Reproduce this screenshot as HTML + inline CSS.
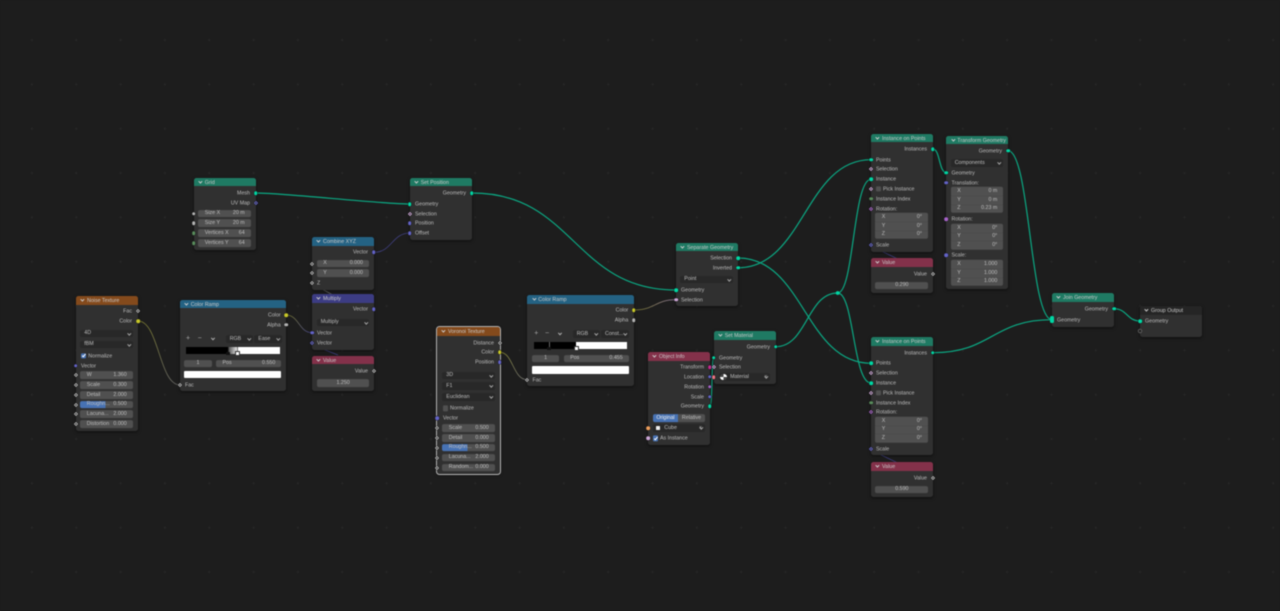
<!DOCTYPE html>
<html><head><meta charset="utf-8"><title>Geometry Nodes</title>
<style>
html,body{margin:0;padding:0;width:1280px;height:611px;overflow:hidden;background:#1d1d1d}
#a{position:absolute;left:0;top:0;width:1280px;height:611px;overflow:hidden;filter:blur(.4px);font-family:"Liberation Sans",sans-serif;font-size:5.3px;color:#bcbcbc;
background:#1d1d1d radial-gradient(circle,#272727 0,#272727 .8px,transparent 1.3px) 9.8px 17.9px/44.33px 44.33px}
svg{position:absolute;left:0;top:0}
.n{position:absolute;background:#303030;border-radius:2.5px;box-shadow:0 1px 3px rgba(0,0,0,.55)}
.h{height:8.6px;line-height:10px;padding-left:11px;border-radius:2.5px 2.5px 0 0;color:#c8c8c8;position:relative;white-space:nowrap}
.h:before{content:"";position:absolute;left:5.4px;top:2.2px;width:1.8px;height:1.8px;border-right:.6px solid #ccc;border-bottom:.6px solid #ccc;transform:rotate(45deg)}
.G{background:#1f7a63}.T{background:#844a1c}.C{background:#246283}.V{background:#3c3c83}.I{background:#83314a}
.l,.R,.f,.s,.o,.d,.k,.x{position:absolute}
.l,.R{white-space:nowrap;line-height:8px;transform:translateY(calc(-50% + .7px))}
.R{transform:translate(-100%,calc(-50% + .7px))}
.f,.s{height:7.8px;line-height:7.8px;border-radius:2px;transform:translateY(-50%);display:flex;justify-content:space-between;padding:.7px 6px 0 6.5px;box-sizing:border-box;white-space:nowrap;background:#505050;color:#bebebe}
.f.c{justify-content:center}
.s{background:#282828;padding-left:4px;justify-content:flex-start;position:absolute}
.s:after{content:"";position:absolute;right:2.4px;top:2px;width:1.6px;height:1.6px;border-right:.5px solid #aaa;border-bottom:.5px solid #aaa;transform:rotate(45deg)}
.o,.d{width:3.6px;height:3.6px;transform:translate(-50%,-50%);border-radius:50%;background:currentColor;box-shadow:0 0 0 .4px #181818}
.d{width:3px;height:3px;border-radius:0;transform:translate(-50%,-50%) rotate(45deg);background:radial-gradient(circle,#2c2c2c 0,#2c2c2c 22%,currentColor 45%)}
.g{color:#00d6a3}.v{color:#6363c7}.y{color:#c7c729}.w{color:#b4b4b4}.p{color:#cca6d6}.i{color:#598c5c}.r{color:#a663c7}.m{color:#c7298f}.b{color:#ed9e5c}.t{color:#eb7582}
.k{width:5.3px;height:5.3px;border-radius:1px;background:#4772b3;transform:translateY(-50%)}
.k.u{background:#505050}
.k.q:after{content:"";position:absolute;left:1.7px;top:.6px;width:1.4px;height:2.6px;border-right:.7px solid #fff;border-bottom:.7px solid #fff;transform:rotate(40deg)}
.x{background:#fff}
.ch{position:absolute;width:2.2px;height:2.2px;border-right:.6px solid #aaa;border-bottom:.6px solid #aaa;transform:translate(-50%,-70%) rotate(45deg)}
.pm{position:absolute;font-size:7px;color:#aaa;line-height:8px;transform:translate(-50%,-50%)}
</style></head><body><div id="a">
<svg width="1280" height="611" viewBox="0 0 1280 611" fill="none">
<defs>
<linearGradient id="y1" gradientUnits="userSpaceOnUse" x1="138" y1="321" x2="180" y2="385"><stop offset="0" stop-color="#7c7c30"/><stop offset="1" stop-color="#666"/></linearGradient>
<linearGradient id="y2" gradientUnits="userSpaceOnUse" x1="286" y1="315" x2="312" y2="333"><stop offset="0" stop-color="#7c7c30"/><stop offset="1" stop-color="#45458a"/></linearGradient>
<linearGradient id="y3" gradientUnits="userSpaceOnUse" x1="500" y1="352" x2="527" y2="380"><stop offset="0" stop-color="#7c7c30"/><stop offset="1" stop-color="#777"/></linearGradient>
<linearGradient id="y4" gradientUnits="userSpaceOnUse" x1="634" y1="310" x2="676" y2="300"><stop offset="0" stop-color="#7c7c30"/><stop offset="1" stop-color="#85708f"/></linearGradient>
</defs>
<g stroke="#0ba883" stroke-width="1.2">
<path d="M256 193C285 193 380 204 410 204"/>
<path d="M472 193C574 193 574 290 676 290"/>
<path d="M738 258C804 258 805 363.3 871 363.3"/>
<path d="M738 267.7C804 267.7 805 159.7 871 159.7"/>
<path d="M775.7 346.7C807 346.7 807 293 837.7 293"/>
<path d="M837.7 293C854 293 853 179.3 871 179.3"/>
<path d="M837.7 293C854 293 853 383 871 383"/>
<path d="M933 149C940 149 939 172.7 946.3 172.7"/>
<path d="M1008 150.7C1030 150.7 1030 319.7 1052 319.7"/>
<path d="M933 352.7C992 352.7 992 319.7 1052 319.7"/>
<path d="M1114 308.7C1127 308.7 1127 321 1140 321"/>
<path d="M710 406C712.5 406 711.5 358 713.7 358"/>
</g>
<g stroke-width=".8">
<path d="M374 252.3C392 252.3 392 233 410 233" stroke="#3f3f80"/>
<path d="M138 321C159 321 159 385 180 385" stroke="url(#y1)"/>
<path d="M286 315C299 315 299 332.7 312 332.7" stroke="url(#y2)"/>
<path d="M500 352.3C513 352.3 513 379.7 527 379.7" stroke="url(#y3)"/>
<path d="M634 310C655 310 655 299.7 676 299.7" stroke="url(#y4)"/>
<path d="M320 288L333 295" stroke="#666"/>
<path d="M320 348L338 355" stroke="#3f3f80"/>
<path d="M879 250L898 259" stroke="#3f3f80"/>
<path d="M879 454L898 463" stroke="#3f3f80"/>
</g>
<circle cx="837.7" cy="293" r="1.9" fill="#00d6a3"/>
</svg>

<!-- Noise -->
<div class="n" style="left:76px;top:296px;width:62px;height:134.7px"><div class="h T">Noise Texture</div></div>
<span class="R" style="left:132px;top:311.3px">Fac</span><span class="R" style="left:132px;top:321px">Color</span>
<div class="s" style="left:80.3px;top:333.7px;width:52.4px">4D</div>
<div class="s" style="left:80.3px;top:344.7px;width:52.4px">fBM</div>
<div class="k q" style="left:81px;top:355.7px"></div><span class="l" style="left:88.3px;top:355.7px">Normalize</span>
<span class="l" style="left:81px;top:365.7px">Vector</span>
<div class="f" style="left:80.3px;top:375.3px;width:52.4px"><span>W</span><span>1.360</span></div>
<div class="f" style="left:80.3px;top:385px;width:52.4px"><span>Scale</span><span>0.300</span></div>
<div class="f" style="left:80.3px;top:395px;width:52.4px"><span>Detail</span><span>2.000</span></div>
<div class="f" style="left:80.3px;top:404.7px;width:52.4px;background:linear-gradient(90deg,#4772b3 48%,#505050 48%)"><span>Roughn...</span><span>0.500</span></div>
<div class="f" style="left:80.3px;top:414.3px;width:52.4px"><span>Lacuna...</span><span>2.000</span></div>
<div class="f" style="left:80.3px;top:424px;width:52.4px"><span>Distortion</span><span>0.000</span></div>

<!-- Grid -->
<div class="n" style="left:193.8px;top:177.7px;width:62px;height:72px"><div class="h G">Grid</div></div>
<span class="R" style="left:250px;top:193px">Mesh</span><span class="R" style="left:250px;top:202.7px">UV Map</span>
<div class="f" style="left:198.3px;top:213.7px;width:52.4px"><span>Size X</span><span>20 m</span></div>
<div class="f" style="left:198.3px;top:223.3px;width:52.4px"><span>Size Y</span><span>20 m</span></div>
<div class="f" style="left:198.3px;top:233px;width:52.4px"><span>Vertices X</span><span>64</span></div>
<div class="f" style="left:198.3px;top:243px;width:52.4px"><span>Vertices Y</span><span>64</span></div>

<!-- Color Ramp 1 -->
<div class="n" style="left:179.7px;top:299.7px;width:106.3px;height:91.6px"><div class="h C">Color Ramp</div></div>
<span class="R" style="left:280.7px;top:315px">Color</span><span class="R" style="left:280.7px;top:324.7px">Alpha</span>
<span class="pm" style="left:188px;top:339.3px">+</span><span class="pm" style="left:199.7px;top:339.3px">−</span><i class="ch" style="left:212.7px;top:339.3px"></i>
<div class="s" style="left:225.7px;top:339.3px;width:27.6px">RGB</div>
<div class="s" style="left:254.3px;top:339.3px;width:27.4px">Ease</div>
<div class="x" style="left:185.7px;top:346.7px;width:94.3px;height:7.3px;background:linear-gradient(90deg,#000 0,#000 45.2%,#555 45.3%,#fff 56%)"></div>
<div class="x" style="left:227.8px;top:346.7px;width:.7px;height:6px;background:#333"></div>
<div class="x" style="left:226.4px;top:352px;width:4px;height:3.4px;background:#111;border-radius:.6px"></div>
<div class="x" style="left:237.1px;top:346.7px;width:.7px;height:5px;background:#777"></div>
<div class="x" style="left:235.3px;top:351px;width:4.4px;height:4.8px;background:#fff;border:.4px solid #333;box-sizing:border-box;border-radius:.6px"></div>
<div class="f" style="left:184.3px;top:363.7px;width:27.4px;justify-content:center;padding:.7px 0 0">1</div>
<div class="f" style="left:216px;top:363.7px;width:65.3px"><span>Pos</span><span>0.550</span></div>
<div class="x" style="left:184.3px;top:371px;width:97px;height:7.3px;border-radius:1px"></div>
<span class="l" style="left:185px;top:384.7px">Fac</span>

<!-- Combine XYZ -->
<div class="n" style="left:312px;top:237.3px;width:61.7px;height:52.7px"><div class="h C">Combine XYZ</div></div>
<span class="R" style="left:368px;top:252.3px">Vector</span>
<div class="f" style="left:316.7px;top:263.7px;width:52.3px"><span>X</span><span>0.000</span></div>
<div class="f" style="left:316.7px;top:273.3px;width:52.3px"><span>Y</span><span>0.000</span></div>
<span class="l" style="left:317px;top:283px">Z</span>

<!-- Multiply -->
<div class="n" style="left:312px;top:294.3px;width:61.7px;height:55.7px"><div class="h V">Multiply</div></div>
<span class="R" style="left:368px;top:309.3px">Vector</span>
<div class="s" style="left:316.7px;top:322.7px;width:52.8px">Multiply</div>
<span class="l" style="left:317px;top:332.7px">Vector</span><span class="l" style="left:317px;top:342.7px">Vector</span>

<!-- Value 1.25 -->
<div class="n" style="left:312px;top:355.7px;width:61.7px;height:35px"><div class="h I">Value</div></div>
<span class="R" style="left:368px;top:371px">Value</span>
<div class="f c" style="left:316.7px;top:383px;width:52.3px">1.250</div>

<!-- Set Position -->
<div class="n" style="left:409.7px;top:177.7px;width:62px;height:62px"><div class="h G">Set Position</div></div>
<span class="R" style="left:466px;top:193px">Geometry</span>
<span class="l" style="left:415px;top:204px">Geometry</span><span class="l" style="left:415px;top:213.7px">Selection</span><span class="l" style="left:415px;top:223.3px">Position</span><span class="l" style="left:415px;top:233px">Offset</span>

<!-- Voronoi -->
<div class="n" style="left:437px;top:327px;width:62.7px;height:147.3px;outline:.6px solid #b4b4b4"><div class="h T">Voronoi Texture</div></div>
<span class="R" style="left:494px;top:342.7px">Distance</span><span class="R" style="left:494px;top:352.3px">Color</span><span class="R" style="left:494px;top:362.3px">Position</span>
<div class="s" style="left:442.3px;top:375.7px;width:52.4px">3D</div>
<div class="s" style="left:442.3px;top:386.3px;width:52.4px">F1</div>
<div class="s" style="left:442.3px;top:397.3px;width:52.4px">Euclidean</div>
<div class="k u" style="left:442.7px;top:408.3px"></div><span class="l" style="left:450px;top:408.3px">Normalize</span>
<span class="l" style="left:443px;top:418.3px">Vector</span>
<div class="f" style="left:442.3px;top:428.3px;width:52.4px"><span>Scale</span><span>0.500</span></div>
<div class="f" style="left:442.3px;top:438px;width:52.4px"><span>Detail</span><span>0.000</span></div>
<div class="f" style="left:442.3px;top:447.7px;width:52.4px;background:linear-gradient(90deg,#4772b3 48%,#505050 48%)"><span>Roughn...</span><span>0.500</span></div>
<div class="f" style="left:442.3px;top:457.7px;width:52.4px"><span>Lacuna...</span><span>2.000</span></div>
<div class="f" style="left:442.3px;top:467.7px;width:52.4px"><span>Random...</span><span>0.000</span></div>

<!-- Color Ramp 2 -->
<div class="n" style="left:527.3px;top:295px;width:106.4px;height:91.3px"><div class="h C">Color Ramp</div></div>
<span class="R" style="left:628.3px;top:310px">Color</span><span class="R" style="left:628.3px;top:320px">Alpha</span>
<span class="pm" style="left:536.3px;top:334.3px">+</span><span class="pm" style="left:547px;top:334.3px">−</span><i class="ch" style="left:560px;top:334.3px"></i>
<div class="s" style="left:572.7px;top:334.3px;width:27.3px">RGB</div>
<div class="s" style="left:601px;top:334.3px;width:27.7px">Const...</div>
<div class="x" style="left:533.7px;top:341.7px;width:93.6px;height:7.6px;background:linear-gradient(90deg,#000 0,#000 45.2%,#fff 45.3%)"></div>
<div class="x" style="left:548.7px;top:341.7px;width:.7px;height:6px;background:#666"></div>
<div class="x" style="left:547px;top:346.8px;width:4px;height:3.4px;background:#111;border-radius:.6px"></div>
<div class="x" style="left:574.2px;top:346px;width:4.4px;height:4.8px;background:#fff;border:.4px solid #333;box-sizing:border-box;border-radius:.6px"></div>
<div class="f" style="left:532px;top:358.7px;width:27.3px;justify-content:center;padding:.7px 0 0">1</div>
<div class="f" style="left:563.7px;top:358.7px;width:65px"><span>Pos</span><span>0.455</span></div>
<div class="x" style="left:532px;top:366.3px;width:96.7px;height:7.4px;border-radius:1px"></div>
<span class="l" style="left:532.5px;top:379.7px">Fac</span>

<!-- Separate Geometry -->
<div class="n" style="left:676px;top:242.7px;width:62px;height:63.3px"><div class="h G">Separate Geometry</div></div>
<span class="R" style="left:732px;top:258px">Selection</span><span class="R" style="left:732px;top:267.7px">Inverted</span>
<div class="s" style="left:680.3px;top:279.7px;width:53px">Point</div>
<span class="l" style="left:681px;top:290px">Geometry</span><span class="l" style="left:681px;top:299.7px">Selection</span>

<!-- Object Info -->
<div class="n" style="left:648px;top:352px;width:61.7px;height:92.7px"><div class="h I">Object Info</div></div>
<span class="R" style="left:704px;top:367px">Transform</span><span class="R" style="left:704px;top:376.7px">Location</span><span class="R" style="left:704px;top:386.7px">Rotation</span><span class="R" style="left:704px;top:396.7px">Scale</span><span class="R" style="left:704px;top:406px">Geometry</span>
<div class="f c" style="left:652.7px;top:418.3px;width:25.6px;background:#4772b3;color:#eee;padding:.7px 0 0;border-radius:2px 0 0 2px">Original</div>
<div class="f c" style="left:678.3px;top:418.3px;width:26.4px;padding:.7px 0 0;border-radius:0 2px 2px 0">Relative</div>
<div class="s" style="left:652.7px;top:428.3px;width:52px;padding-left:11.6px">Cube<span style="position:absolute;right:2.6px;color:#aaa">×</span></div>
<div class="x" style="left:655.6px;top:426.2px;width:4.2px;height:4.2px;border-radius:.6px;background:#eee"></div>
<div class="k q" style="left:653px;top:438.3px"></div><span class="l" style="left:660px;top:438.3px">As Instance</span>

<!-- Set Material -->
<div class="n" style="left:713.7px;top:331.3px;width:62px;height:52.4px"><div class="h G">Set Material</div></div>
<span class="R" style="left:770px;top:346.7px">Geometry</span>
<span class="l" style="left:719px;top:357.7px">Geometry</span><span class="l" style="left:719px;top:367.3px">Selection</span>
<div class="s" style="left:718.7px;top:377px;width:51.3px;padding-left:11.4px">Material<span style="position:absolute;right:2.6px;color:#aaa">×</span></div>
<div class="x" style="left:720px;top:373.8px;width:6.5px;height:6.5px;border-radius:50%;background:conic-gradient(#fff 0 25%,#444 0 50%,#fff 0 75%,#444 0)"></div>

<!-- Instance on Points 1 -->
<div class="n" style="left:871px;top:133.7px;width:61.7px;height:118px"><div class="h G">Instance on Points</div></div>
<span class="R" style="left:927px;top:149px">Instances</span>
<span class="l" style="left:876px;top:159.7px">Points</span><span class="l" style="left:876px;top:169.3px">Selection</span><span class="l" style="left:876px;top:179.3px">Instance</span>
<div class="k u" style="left:875.7px;top:189px"></div><span class="l" style="left:883px;top:189px">Pick Instance</span>
<span class="l" style="left:876px;top:198.7px">Instance Index</span><span class="l" style="left:876px;top:208.7px">Rotation:</span>
<div class="f" style="left:875.3px;top:217.3px;width:52.7px;height:8.5px;border-radius:2px 2px 0 0"><span>X</span><span>0°</span></div>
<div class="f" style="left:875.3px;top:226px;width:52.7px;height:8.5px;border-radius:0"><span>Y</span><span>0°</span></div>
<div class="f" style="left:875.3px;top:234.7px;width:52.7px;height:8.5px;border-radius:0 0 2px 2px"><span>Z</span><span>0°</span></div>
<span class="l" style="left:876px;top:245px">Scale</span>

<!-- Value .29 -->
<div class="n" style="left:871px;top:258.3px;width:61.7px;height:35px"><div class="h I">Value</div></div>
<span class="R" style="left:927px;top:273.7px">Value</span>
<div class="f c" style="left:875.3px;top:285.7px;width:52.7px">0.290</div>

<!-- Transform Geometry -->
<div class="n" style="left:946.3px;top:135.7px;width:61.7px;height:153.6px"><div class="h G">Transform Geometry</div></div>
<span class="R" style="left:1002px;top:150.7px">Geometry</span>
<div class="s" style="left:950.7px;top:163px;width:52.6px">Components</div>
<span class="l" style="left:951.5px;top:172.7px">Geometry</span><span class="l" style="left:951.5px;top:182.7px">Translation:</span>
<div class="f" style="left:950.7px;top:191.3px;width:52.6px;height:8.5px;border-radius:2px 2px 0 0"><span>X</span><span>0 m</span></div>
<div class="f" style="left:950.7px;top:200px;width:52.6px;height:8.5px;border-radius:0"><span>Y</span><span>0 m</span></div>
<div class="f" style="left:950.7px;top:208.7px;width:52.6px;height:8.5px;border-radius:0 0 2px 2px"><span>Z</span><span>0.23 m</span></div>
<span class="l" style="left:951.5px;top:219px">Rotation:</span>
<div class="f" style="left:950.7px;top:228px;width:52.6px;height:8.5px;border-radius:2px 2px 0 0"><span>X</span><span>0°</span></div>
<div class="f" style="left:950.7px;top:236.7px;width:52.6px;height:8.5px;border-radius:0"><span>Y</span><span>0°</span></div>
<div class="f" style="left:950.7px;top:245.3px;width:52.6px;height:8.5px;border-radius:0 0 2px 2px"><span>Z</span><span>0°</span></div>
<span class="l" style="left:951.5px;top:255.3px">Scale:</span>
<div class="f" style="left:950.7px;top:264.3px;width:52.6px;height:8.5px;border-radius:2px 2px 0 0"><span>X</span><span>1.000</span></div>
<div class="f" style="left:950.7px;top:273px;width:52.6px;height:8.5px;border-radius:0"><span>Y</span><span>1.000</span></div>
<div class="f" style="left:950.7px;top:281.7px;width:52.6px;height:8.5px;border-radius:0 0 2px 2px"><span>Z</span><span>1.000</span></div>

<!-- Instance on Points 2 -->
<div class="n" style="left:871px;top:337.3px;width:61.7px;height:118px"><div class="h G">Instance on Points</div></div>
<span class="R" style="left:927px;top:352.7px">Instances</span>
<span class="l" style="left:876px;top:363.3px">Points</span><span class="l" style="left:876px;top:373.3px">Selection</span><span class="l" style="left:876px;top:383px">Instance</span>
<div class="k u" style="left:875.7px;top:393px"></div><span class="l" style="left:883px;top:393px">Pick Instance</span>
<span class="l" style="left:876px;top:402.7px">Instance Index</span><span class="l" style="left:876px;top:412.3px">Rotation:</span>
<div class="f" style="left:875.3px;top:421px;width:52.7px;height:8.5px;border-radius:2px 2px 0 0"><span>X</span><span>0°</span></div>
<div class="f" style="left:875.3px;top:429.7px;width:52.7px;height:8.5px;border-radius:0"><span>Y</span><span>0°</span></div>
<div class="f" style="left:875.3px;top:438.3px;width:52.7px;height:8.5px;border-radius:0 0 2px 2px"><span>Z</span><span>0°</span></div>
<span class="l" style="left:876px;top:448.7px">Scale</span>

<!-- Value .59 -->
<div class="n" style="left:871px;top:462.3px;width:61.7px;height:35px"><div class="h I">Value</div></div>
<span class="R" style="left:927px;top:477.7px">Value</span>
<div class="f c" style="left:875.3px;top:489.7px;width:52.7px">0.590</div>

<!-- Join Geometry -->
<div class="n" style="left:1052px;top:293.3px;width:62px;height:33.4px"><div class="h G">Join Geometry</div></div>
<span class="R" style="left:1108px;top:308.7px">Geometry</span><span class="l" style="left:1057px;top:319.7px">Geometry</span>

<!-- Group Output -->
<div class="n" style="left:1140px;top:305.7px;width:62px;height:31.6px"><div class="h" style="background:#252525;height:9.3px;line-height:10.6px">Group Output</div></div>
<span class="l" style="left:1145px;top:321px">Geometry</span>

<!-- Sockets -->
<i class="d w" style="left:138px;top:311.3px"></i><i class="o y" style="left:138px;top:321px"></i><i class="o v" style="left:75.8px;top:365.7px"></i>
<i class="d w" style="left:75.8px;top:375.3px"></i><i class="d w" style="left:75.8px;top:385px"></i><i class="d w" style="left:75.8px;top:395px"></i><i class="d w" style="left:75.8px;top:404.7px"></i><i class="d w" style="left:75.8px;top:414.3px"></i><i class="d w" style="left:75.8px;top:424px"></i>
<i class="o g" style="left:255.8px;top:193px"></i><i class="d v" style="left:255.8px;top:202.7px"></i>
<i class="o w" style="left:193.8px;top:213.7px"></i><i class="o w" style="left:193.8px;top:223.3px"></i><i class="o i" style="left:193.8px;top:233px"></i><i class="o i" style="left:193.8px;top:243px"></i>
<i class="o y" style="left:286px;top:315px"></i><i class="o w" style="left:286px;top:324.7px"></i><i class="d w" style="left:179.7px;top:384.7px"></i>
<i class="o v" style="left:373.7px;top:252.3px"></i><i class="d w" style="left:312px;top:263.7px"></i><i class="d w" style="left:312px;top:273.3px"></i><i class="d w" style="left:312px;top:283px"></i>
<i class="o v" style="left:373.7px;top:309.3px"></i><i class="o v" style="left:312px;top:332.7px"></i><i class="d v" style="left:311.5px;top:342.7px"></i>
<i class="d w" style="left:374px;top:371px"></i>
<i class="o g" style="left:471.7px;top:193px"></i><i class="o g" style="left:409.7px;top:204px"></i><i class="d p" style="left:409.7px;top:213.7px"></i><i class="o v" style="left:409.7px;top:223.3px"></i><i class="o v" style="left:409.7px;top:233px"></i>
<i class="d w" style="left:499.7px;top:342.7px"></i><i class="o y" style="left:499.7px;top:352.3px"></i><i class="o v" style="left:499.7px;top:362.3px"></i><i class="o v" style="left:437px;top:418.3px"></i>
<i class="d w" style="left:437px;top:428.3px"></i><i class="d w" style="left:437px;top:438px"></i><i class="d w" style="left:437px;top:447.7px"></i><i class="d w" style="left:437px;top:457.7px"></i><i class="d w" style="left:437px;top:467.7px"></i>
<i class="o y" style="left:633.7px;top:310px"></i><i class="o w" style="left:633.7px;top:320px"></i><i class="d w" style="left:527.3px;top:379.7px"></i>
<i class="o g" style="left:738px;top:258px"></i><i class="o g" style="left:738px;top:267.7px"></i><i class="o g" style="left:676px;top:290px"></i><i class="o p" style="left:676px;top:299.7px"></i>
<i class="o m" style="left:709.7px;top:367px"></i><i class="o v" style="left:709.7px;top:376.7px"></i><i class="o r" style="left:709.7px;top:386.7px"></i><i class="o v" style="left:709.7px;top:396.7px"></i><i class="o g" style="left:709.7px;top:406px"></i>
<i class="o b" style="left:648px;top:428.3px"></i><i class="o p" style="left:648px;top:438.3px"></i>
<i class="o g" style="left:775.7px;top:346.7px"></i><i class="o g" style="left:713.7px;top:357.7px"></i><i class="d p" style="left:713.7px;top:367.3px"></i><i class="o t" style="left:713.7px;top:377px"></i>
<i class="o g" style="left:932.7px;top:149px"></i><i class="o g" style="left:871px;top:159.7px"></i><i class="d p" style="left:871px;top:169.3px"></i><i class="o g" style="left:871px;top:179.3px"></i><i class="d p" style="left:871px;top:189px"></i><i class="o i" style="left:871px;top:198.7px"></i><i class="d r" style="left:871px;top:208.7px"></i><i class="d v" style="left:870.5px;top:245px"></i>
<i class="d w" style="left:933px;top:273.7px"></i>
<i class="o g" style="left:1008px;top:150.7px"></i><i class="o g" style="left:946.3px;top:172.7px"></i><i class="o v" style="left:946.3px;top:182.7px"></i><i class="o r" style="left:946.3px;top:219px"></i><i class="o v" style="left:946.3px;top:255.3px"></i>
<i class="o g" style="left:932.7px;top:352.7px"></i><i class="o g" style="left:871px;top:363.3px"></i><i class="d p" style="left:871px;top:373.3px"></i><i class="o g" style="left:871px;top:383px"></i><i class="d p" style="left:871px;top:393px"></i><i class="o i" style="left:871px;top:402.7px"></i><i class="d r" style="left:871px;top:412.3px"></i><i class="d v" style="left:870.5px;top:448.7px"></i>
<i class="d w" style="left:933px;top:477.7px"></i>
<i class="o g" style="left:1114px;top:308.7px"></i><i class="x" style="left:1050.3px;top:315.9px;width:3.6px;height:7.6px;border-radius:1.6px;background:#00d6a3"></i>
<i class="o g" style="left:1140px;top:321px"></i><i class="o" style="left:1140px;top:330.7px;width:3px;height:3px;background:#222;box-shadow:0 0 0 .6px #777"></i>
</div></body></html>
